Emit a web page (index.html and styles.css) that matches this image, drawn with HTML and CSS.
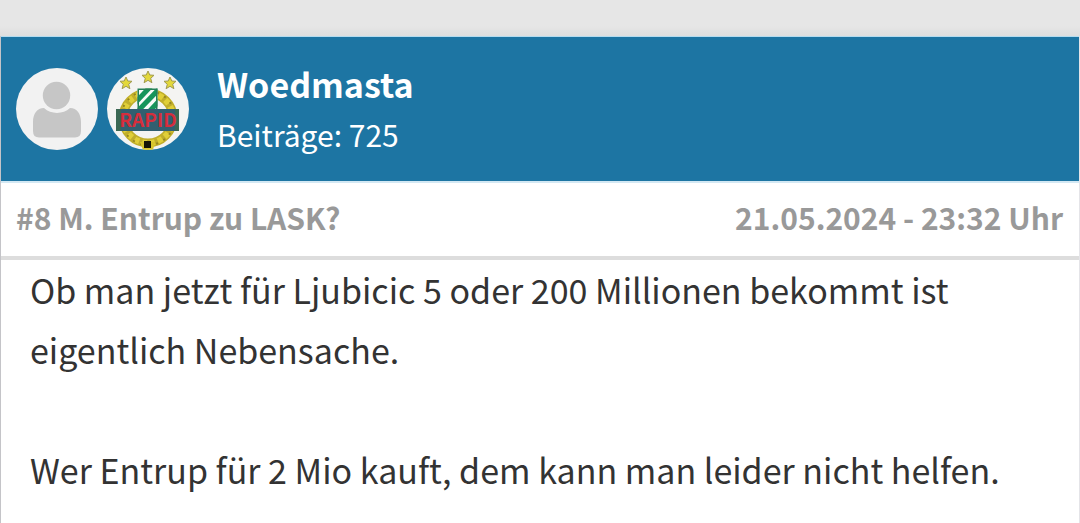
FILE: index.html
```
<!DOCTYPE html>
<html lang="de">
<head>
    <meta charset="UTF-8">
    <meta name="viewport" content="width=device-width, initial-scale=1.0">
    <title>M. Entrup zu LASK?</title>
    <link rel="stylesheet" href="styles.css">
</head>
<body>
    <article class="post">
        <header class="post-header">
            <svg class="avatar" viewBox="0 0 82 82" role="img" aria-label="Profilbild">
                <circle cx="41" cy="41" r="41" fill="#f2f2f2"/>
                <circle cx="40.500" cy="27.500" r="13.700" fill="#c6c6c6"/>
                <path d="M28 40C21 40 17 46 17 54V63Q17 69.500 23 69.500H59Q65 69.500 65 63V54C65 46 61 40 54 40C47 46.500 35 46.500 28 40Z" fill="#c6c6c6"/>
            </svg>
            <svg class="avatar club" viewBox="0 0 82 82" role="img" aria-label="Vereinswappen">
                <defs>
                    <clipPath id="badge"><circle cx="41" cy="41" r="41"/></clipPath>
                    <clipPath id="shield"><path d="M30.500 20.500H50.500V43H30.500Z"/></clipPath>
                    <path id="star" d="M0-6L1.800-2L6-1.700L2.700 1.300L3.900 5.700L0 3.300L-3.900 5.700L-2.700 1.300L-6-1.700L-1.800-2Z"/>
                </defs>
                <g clip-path="url(#badge)">
                    <rect width="82" height="82" fill="#f4f4f2"/>
                    <circle cx="41" cy="50" r="25" fill="none" stroke="#c0ae2b" stroke-width="9"/>
                    <circle cx="41" cy="50" r="25" fill="none" stroke="#e0cf38" stroke-width="6" stroke-dasharray="5 3"/>
                    <circle cx="41" cy="50" r="27" fill="none" stroke="#958620" stroke-width="2" stroke-dasharray="2 6"/>
                    <g fill="#e3d83b" stroke="#a09a50" stroke-width="1">
                        <use href="#star" x="19" y="15"/>
                        <use href="#star" x="41" y="9"/>
                        <use href="#star" x="63" y="15"/>
                    </g>
                    <g clip-path="url(#shield)">
                        <rect x="30" y="20" width="21" height="23" fill="#f7fbf7"/>
                        <path d="M28 35L45 17M28 46L54 19M38 48L55 30" stroke="#16955a" stroke-width="5"/>
                        <path d="M30.500 43V20.500H50.500V43" fill="none" stroke="#248058" stroke-width="3"/>
                    </g>
                    <rect x="9" y="41" width="63" height="22" fill="#315f70"/>
                    <path d="M9 41H14V63H9ZM68 41H72V63H68Z" fill="#3b6853"/>
                    <text class="club-name" x="41" y="59" text-anchor="middle">RAPID</text>
                    <path d="M33 74L48 74L46 82H36Z" fill="#d7c52e"/>
                    <rect x="37" y="73" width="7" height="7" fill="#151508"/>
                </g>
            </svg>
            <div class="user">
                <strong class="user-name">Woedmasta</strong>
                <span class="user-posts">Beiträge: 725</span>
            </div>
        </header>
        <div class="post-info">
            <span>#8 M. Entrup zu LASK?</span>
            <time datetime="2024-05-21T23:32">21.05.2024 - 23:32 Uhr</time>
        </div>
        <div class="post-text">
            <p>Ob man jetzt für Ljubicic 5 oder 200 Millionen bekommt ist eigentlich Nebensache.</p>
            <p>Wer Entrup für 2 Mio kauft, dem kann man leider nicht helfen.</p>
        </div>
    </article>
</body>
</html>
```
FILE: styles.css
```
* {
    box-sizing: border-box;
}

body {
    display: flex;
    flex-direction: column;
    min-height: 100vh;
    margin: 0;
    padding-top: 36px;
    background: linear-gradient(#e6e6e6 26px, #dedede 36px, #fff 36px);
    color: #333;
    font-family: "Noto Sans CJK SC", "Open Sans", sans-serif;
}

.post {
    flex: 1;
    background-color: #fff;
    border-left: 1px solid #c4c4c8;
    border-right: 1px solid #e4e4e8;
}

.post-header {
    display: flex;
    align-items: center;
    height: 147px;
    padding: 0 15px;
    background-color: #1d75a3;
    border-top: 1px solid #b5dcef;
    border-bottom: 2px solid #d3e8f3;
    color: #fff;
}

.avatar {
    flex: none;
    width: 82px;
    height: 82px;
}

.club {
    margin-left: 9px;
}

.club-name {
    fill: #d52e3c;
    font-size: 19px;
    font-weight: bold;
}

.user {
    display: flex;
    flex-direction: column;
    margin-left: 28px;
}

.user-name {
    font-size: 34px;
    line-height: 50px;
}

.user-posts {
    font-size: 30px;
    line-height: 50px;
}

.post-info {
    display: flex;
    justify-content: space-between;
    padding: 9px 16px 14px 15px;
    border-bottom: 4px solid #ddd;
    color: #999;
    font-size: 30px;
    font-weight: bold;
    line-height: 50px;
}

.post-text {
    padding: 0 29px;
    font-size: 34px;
    line-height: 60px;
}

.post-text p {
    margin: 0;
}

.post-text p + p {
    margin-top: 60px;
}
```
